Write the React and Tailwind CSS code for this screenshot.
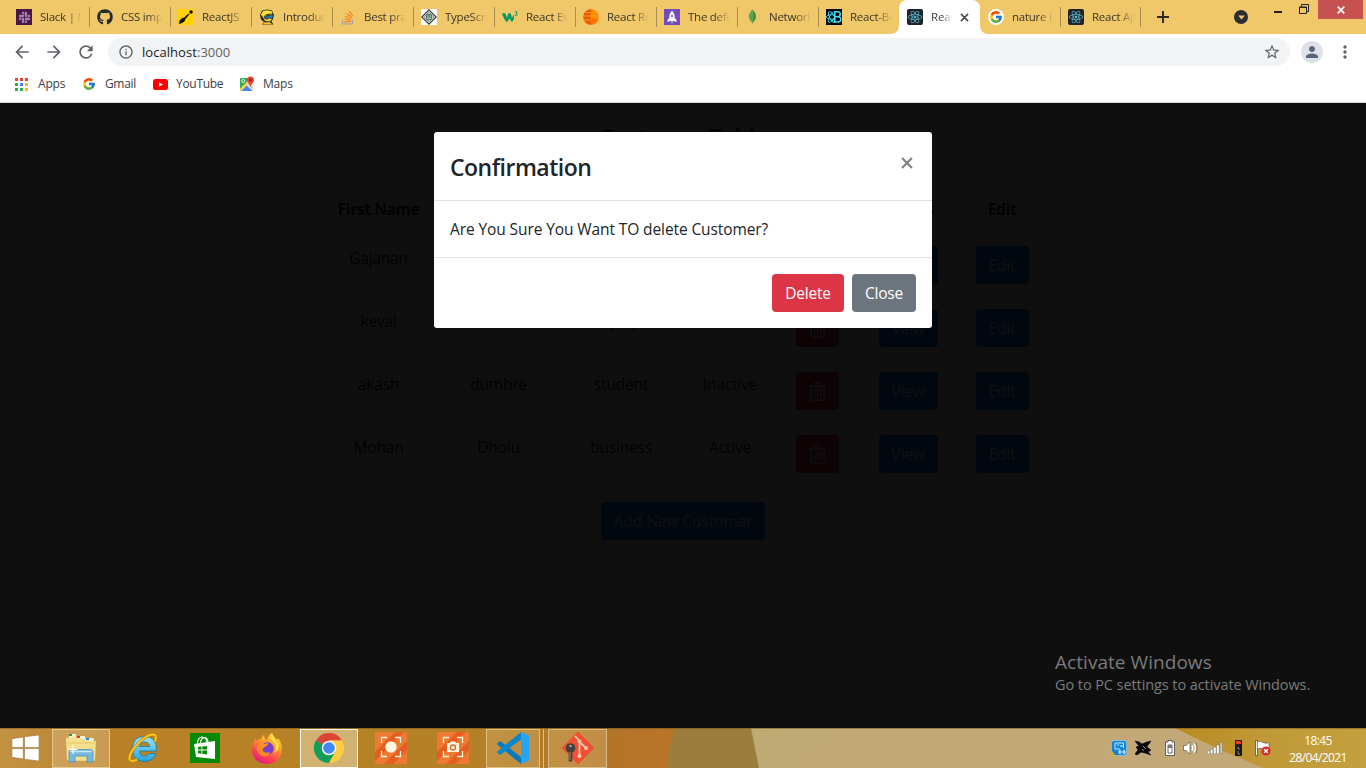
import React from "react";
import { FaGithub, FaReact, FaSlack } from "react-icons/fa";
import { FcGoogle } from "react-icons/fc";
import {
  MdArrowBack,
  MdArrowForward,
  MdRefresh,
  MdOutlineInfo,
  MdStarBorder,
  MdPerson,
  MdMoreVert,
} from "react-icons/md";

/* ---------- favicons ---------- */

const SlackIcon = () => (
  <span className="flex size-4 items-center justify-center bg-[#4a154b]">
    <FaSlack className="size-[13px] text-[#a583a6]" />
  </span>
);

const GithubIcon = () => <FaGithub className="size-4 text-[#24292e]" />;

const KnifeIcon = () => (
  <svg viewBox="0 0 16 16" className="size-4">
    <rect width="16" height="16" fill="#ffd200" />
    <path d="M1.2 14.8 L2 11.5 Q4 8.5 6 9 L10.5 5 L11 5.6 L7 10 Q7 12.5 4 13.5 Z" fill="#111" stroke="#111" strokeWidth=".7" />
    <circle cx="13" cy="3" r="1.8" fill="#111" />
  </svg>
);

const FaceIcon = () => (
  <svg viewBox="0 0 16 16" className="size-4">
    <path d="M1 6 L3 1.5 L8 .6 L13 1.5 L14.5 5 L14 10 L12.5 12.5 L14.5 15.5 H3 L5 13 L2 10.5 Z" fill="#2b2718" />
    <path d="M1.8 5.8 L4 2 L8 1.3 L12.8 2.2 L13.5 4.5 L8 5 L4 8 Z" fill="#ffe03a" />
    <path d="M3.5 7.5 L13 5 L13 10 L11 12.5 L6 12 Z" fill="#f6cc45" />
    <path d="M5.5 7.4 L14.5 5.6 L13.7 9 L10.9 9.4 L10 8 L8.8 10 L6 9.8 Z" fill="#1a86cc" stroke="#111" strokeWidth=".7" />
    <path d="M5 13.3 L11 13.3 L13.2 15.2 H4 Z" fill="#f0c23b" />
  </svg>
);

const StackIcon = () => (
  <svg viewBox="0 0 16 16" className="size-4" fill="none">
    <path d="M2.5 10.5 V14.8 H12.5 V10.5" stroke="#a3a5a6" strokeWidth="1.3" />
    <path d="M4.3 12.6 H10.8 M4.4 10 L10.8 11.2 M5 7.2 L11.2 9.8 M6.6 4.4 L12 8.2 M9.2 2.2 L13 7" stroke="#f48024" strokeWidth="1.2" />
  </svg>
);

const DiamondIcon = () => (
  <svg viewBox="0 0 16 16" className="size-4" fill="none">
    <rect width="16" height="16" fill="#fff" />
    <path d="M8 .8 L15.2 8 L8 15.2 L.8 8 Z" stroke="#333" strokeWidth="1.1" />
    <path d="M8 2.8 L13.2 8 L8 13.2 L2.8 8 Z" stroke="#555" strokeWidth=".7" />
    <circle cx="8" cy="8" r="3.4" fill="#4f7d61" />
    <path d="M6 7 H7.4 M8.7 7 H10 M6 9.2 H10" stroke="#dce9df" strokeWidth="1" />
  </svg>
);

const W3Icon = () => (
  <svg viewBox="0 0 16 16" className="size-4" fill="none">
    <path d="M0 4.2 H3.2 L5 8.8 L6.4 4.2 H8.6 L10 8.8 L12 5.4 V9.5 L10 13.2 L7.6 9.4 L5 13.2 Q2 11 0 4.2 Z" fill="#04995f" />
    <path d="M12.8 2.8 H15.2 L14 4.2 Q15.8 4.6 15.2 6 Q14.4 7 12.8 6.2" stroke="#04995f" strokeWidth=".9" />
  </svg>
);

const OrangeIcon = () => (
  <svg viewBox="0 0 16 16" className="size-4">
    <clipPath id="ball"><circle cx="8" cy="8" r="7.7" /></clipPath>
    <g clipPath="url(#ball)">
      <rect width="16" height="16" fill="#ff8a00" />
      <rect width="8" height="16" fill="#e65c00" />
      <path d="M0 3.5 H16 M0 7 H16 M0 11 H16" stroke="#ff9a14" strokeWidth="1" />
      <path d="M8 10 H16 V16 H8 Z" fill="#ff7400" />
    </g>
  </svg>
);

const RocketIcon = () => (
  <svg viewBox="0 0 16 16" className="size-4">
    <rect width="16" height="16" fill="#764abc" />
    <path d="M8 1.8 Q11 4.5 10.7 9 L12.5 11 V13 L10 12 H6 L3.5 13 V11 L5.3 9 Q5 4.5 8 1.8 Z M7 12.6 H9 L8 14.6 Z" fill="#fff" />
    <circle cx="8" cy="7" r="1.1" fill="#764abc" />
  </svg>
);

const LeafIcon = () => (
  <svg viewBox="0 0 16 16" className="size-4">
    <path d="M7.4 .5 Q3.6 4 3.8 8 Q4 11.5 7.2 13.8 L7.5 15.5 Z" fill="#58aa50" />
    <path d="M7.4 .5 Q11.4 4 11.1 8 Q10.8 11.5 7.8 13.8 L7.4 15.5 Z" fill="#3f9143" />
  </svg>
);

const ReactBootstrapIcon = () => (
  <svg viewBox="0 0 16 16" className="size-4" fill="none" stroke="#41e0fd">
    <rect width="16" height="16" fill="#000" stroke="none" />
    <ellipse cx="5.5" cy="8" rx="5" ry="2.2" strokeWidth=".9" />
    <ellipse cx="6" cy="8" rx="6" ry="2.3" strokeWidth=".9" transform="rotate(60 6 8)" />
    <ellipse cx="6" cy="8" rx="6" ry="2.3" strokeWidth=".9" transform="rotate(-60 6 8)" />
    <path d="M8.5 2.8 H12 Q14.4 3 14.2 5.4 Q14 7.6 12 7.7 H8.8 M12 7.7 Q15 7.8 14.9 10.4 Q14.6 13 12 13 H8.8 V3" strokeWidth="1.5" fill="#000" />
  </svg>
);

const ReactIcon = () => (
  <span className="flex size-4 items-center justify-center rounded-[2px] bg-[#20232a]">
    <FaReact className="size-[14px] text-[#61c5dc]" />
  </span>
);

const GoogleTabIcon = () => (
  <span className="flex size-4 items-center justify-center rounded-full bg-white">
    <FcGoogle className="size-[14px]" />
  </span>
);

/* ---------- browser chrome ---------- */

const leftTabs = [
  ["Slack | N", SlackIcon],
  ["CSS imp", GithubIcon],
  ["ReactJS", KnifeIcon],
  ["Introduc", FaceIcon],
  ["Best prac", StackIcon],
  ["TypeScr", DiamondIcon],
  ["React Ev", W3Icon],
  ["React Ro", OrangeIcon],
  ["The defi", RocketIcon],
  ["Network", LeafIcon],
  ["React-Bo", ReactBootstrapIcon],
];

const rightTabs = [
  ["nature im", GoogleTabIcon],
  ["React Ap", ReactIcon],
];

const Tab = ({ label, Icon, last, right }) => (
  <div className={`flex h-full items-center ${right ? "w-20" : "w-[81px]"}`}>
    <div className="flex w-full shrink-0 items-center pl-2">
      <span className="shrink-0"><Icon /></span>
      <span className="ml-2 w-[42px] shrink-0 overflow-hidden text-[11.5px] leading-4 tracking-[-0.25px] whitespace-nowrap text-[#3a3427] [mask-image:linear-gradient(to_right,#000_62%,transparent)]">
        {label}
      </span>
      <span className={`h-5 w-px shrink-0 ${right ? "ml-[6px]" : "ml-[7px]"} ${last ? "" : "bg-[#a98d4e]"}`} />
    </div>
  </div>
);

const TabStrip = () => (
  <div className="flex h-[34px] bg-[#f0c869] pl-2">
    {leftTabs.map(([label, Icon], i) => (
      <Tab key={label} label={label} Icon={Icon} last={i === leftTabs.length - 1} />
    ))}
    <div className="relative flex h-full w-[81px] items-center rounded-t-lg bg-white pl-2">
      <svg viewBox="0 0 8 8" className="absolute bottom-0 -left-2 size-2"><path d="M8 0 V8 H0 A8 8 0 0 0 8 0" fill="#fff" /></svg>
      <svg viewBox="0 0 8 8" className="absolute -right-2 bottom-0 size-2"><path d="M0 0 V8 H8 A8 8 0 0 1 0 0" fill="#fff" /></svg>
      <ReactIcon />
      <span className="ml-2 w-[21px] overflow-hidden text-[11.5px] leading-4 tracking-[-0.2px] whitespace-nowrap text-[#3c4043] [mask-image:linear-gradient(to_right,#000_50%,transparent)]">
        Reac
      </span>
      <svg viewBox="0 0 10 10" className="ml-2 size-[9px]"><path d="M1 1 L9 9 M9 1 L1 9" stroke="#45494d" strokeWidth="1.7" /></svg>
    </div>
    {rightTabs.map(([label, Icon]) => (
      <Tab key={label} label={label} Icon={Icon} right />
    ))}
    <svg viewBox="0 0 12 12" className="mt-[11px] ml-[17px] size-3"><path d="M6 0 V12 M0 6 H12" stroke="#2f2a1c" strokeWidth="2" /></svg>
    <div className="mt-[10px] ml-[65px] flex size-[14px] items-center justify-center rounded-full bg-[#2c2d30]">
      <svg viewBox="0 0 8 6" className="h-[5px] w-[7px]"><path d="M0 .5 H8 L4 5.5 Z" fill="#f0c869" /></svg>
    </div>
    <div className="mt-[11px] ml-[26px] h-[2px] w-2 bg-[#222]" />
    <svg viewBox="0 0 10 10" className="mt-[4px] ml-[17px] size-[10px]" fill="none" stroke="#222">
      <path d="M2.5 2.5 V.5 H9.5 V7.5 H7.5" /><path d="M.5 9.5 V3 H7.5 V9.5 Z" /><path d="M.5 3.4 H7.5" />
    </svg>
    <div className="ml-[9px] flex h-[19px] w-[45px] items-center justify-center bg-[#c75050]">
      <svg viewBox="0 0 8 8" className="size-2"><path d="M.7 .7 L7.3 7.3 M7.3 .7 L.7 7.3" stroke="#fff" strokeWidth="1.7" /></svg>
    </div>
  </div>
);

const Toolbar = () => (
  <div className="flex h-9 items-center bg-white pl-3 text-[#5f6368]">
    <MdArrowBack className="size-5" />
    <MdArrowForward className="ml-3 size-5" />
    <MdRefresh className="ml-3 size-5" />
    <div className="ml-3 flex h-7 w-[1182px] items-center rounded-full bg-[#f1f3f4] pr-[9px] pl-[10px]">
      <MdOutlineInfo className="size-4" />
      <span className="ml-2 pt-px text-[13px] tracking-[0.05px] text-[#606468]">
        <span className="text-[#202124]">localhost</span>:3000
      </span>
      <MdStarBorder className="ml-auto size-[18px]" />
    </div>
    <div className="ml-[11px] flex size-[22px] items-center justify-center rounded-full bg-[#dee1e6]">
      <MdPerson className="size-[18px] text-[#5a6478]" />
    </div>
    <MdMoreVert className="ml-3 size-5" />
  </div>
);

const AppsIcon = () => (
  <span className="grid grid-cols-3 gap-[2px]">
    {["bg-[#ea4335]", "bg-[#ea4335]", "bg-[#ea4335]", "bg-[#34a853]", "bg-[#4285f4]", "bg-[#fbbc04]", "bg-[#34a853]", "bg-[#34a853]", "bg-[#fbbc04]"].map((c, i) => (
      <span key={i} className={`size-[3px] ${c}`} />
    ))}
  </span>
);

const MapsIcon = () => (
  <svg viewBox="0 0 16 16" className="size-4">
    <rect x="1" y="2" width="13" height="13" rx="1.2" fill="#e8e8e8" />
    <path d="M1 3 Q1 2 2 2 H9 L8 7 L1 13.6 Z" fill="#34a853" />
    <path d="M1.6 15 L7.5 9.2 L13.4 15 Z" fill="#4285f4" />
    <path d="M1 12.5 L9.5 4 L11 6.5 L2.4 15 H2 Q1 15 1 14 Z" fill="#fbd04a" opacity=".85" />
    <path d="M8.5 8.2 L10 7 L14 11 V14 Z" fill="#c9c9c9" />
    <circle cx="4.2" cy="5" r="1.5" fill="none" stroke="#fff" strokeWidth=".8" />
    <path d="M11.5 .5 A3.6 3.6 0 0 1 15.1 4.1 Q15 6 12.8 8 L11.5 11 L10.2 8 Q8 6 7.9 4.1 A3.6 3.6 0 0 1 11.5 .5" fill="#ea4335" />
    <circle cx="11.5" cy="4" r="1.3" fill="#8c1b12" />
  </svg>
);

const Bookmarks = () => (
  <div className="flex h-[33px] items-center border-b border-[#d5d6d8] bg-white pb-[4px] pl-[15px] text-[12px] tracking-[-0.2px] text-[#3c4043]">
    <AppsIcon />
    <span className="ml-[10px] w-[45px]">Apps</span>
    <FcGoogle className="-ml-px size-[14px]" />
    <span className="ml-[9px] w-[48px] tracking-[-0.35px]">Gmail</span>
    <svg viewBox="0 0 15 11" className="h-[11px] w-[15px]"><rect width="15" height="11" rx="2.6" fill="#f00" /><path d="M6 3.2 L10 5.5 L6 7.8 Z" fill="#fff" /></svg>
    <span className="ml-2 w-[63px] tracking-[-0.3px]">YouTube</span>
    <MapsIcon />
    <span className="ml-2 tracking-[-0.2px]">Maps</span>
  </div>
);

/* ---------- page ---------- */

const customers = [
  ["Gajanan", "Bhosale", "student", "Active"],
  ["keval", "shah", "employee", "Active"],
  ["akash", "dumbre", "student", "Inactive"],
  ["Mohan", "Dholu", "business", "Active"],
];

const cols = "grid grid-cols-[122px_118px_127px_91px_83px_99px_89px] text-center";
const btn = "flex h-[38px] items-center justify-center rounded text-white";

const Trash = () => (
  <svg viewBox="0 0 17 19" className="h-[19px] w-[17px]" fill="none" stroke="#fff">
    <path d="M0 4 H17 M4.8 3.6 L6.2 1 H10.8 L12.2 3.6" strokeWidth="1.5" />
    <path d="M2 4 V16.5 Q2 18.2 3.7 18.2 H13.3 Q15 18.2 15 16.5 V4" strokeWidth="1.5" />
    <path d="M5.3 6.5 V15 M8.5 6.5 V15 M11.7 6.5 V15" strokeWidth="1.4" />
  </svg>
);

const Page = () => (
  <div className="flex h-full flex-col items-center bg-white text-[15.5px] leading-6 text-[#212529]">
    <h3 className="mt-[18px] h-[75px] text-[23px] leading-[33px] font-semibold tracking-[-0.5px]">Customer Table</h3>
    <div className="w-[731px]">
      <div className={`${cols} h-[38px] border-b-2 border-[#dee2e6] pt-px font-bold tracking-[-0.35px]`}>
        <span>First Name</span>
        <span>Last Name</span>
        <span>Occupation</span>
        <span>Status</span>
        <span>Delete</span>
        <span>Details</span>
        <span>Edit</span>
      </div>
      {customers.map((row) => (
        <div key={row[0]} className={`${cols} h-[63px] pt-3 tracking-[-0.2px]`}>
          {row.map((cell, i) => (
            <span key={i}>{cell}</span>
          ))}
          <span className={`${btn} mx-auto w-[43px] bg-[#dc3545]`}><Trash /></span>
          <span className={`${btn} mx-auto w-[59px] bg-[#007bff]`}>View</span>
          <span className={`${btn} mx-auto w-[53px] bg-[#007bff]`}>Edit</span>
        </div>
      ))}
    </div>
    <span className={`${btn} mt-4 w-[164px] bg-[#007bff] tracking-[-0.1px]`}>Add New Customer</span>
  </div>
);

const Modal = () => (
  <div className="flex w-[498px] flex-col rounded-[3px] bg-white text-[#212529]">
    <div className="flex h-[69px] items-start justify-between border-b border-[#dee2e6] px-4 pt-4">
      <h4 className="text-[23px] leading-[38px] font-semibold tracking-[-0.5px]">Confirmation</h4>
      <svg viewBox="0 0 11 11" className="mt-[9px] mr-[3px] size-3"><path d="M1 1 L10 10 M10 1 L1 10" stroke="#808080" strokeWidth="2" /></svg>
    </div>
    <div className="h-[57px] border-b border-[#dee2e6] p-4 text-[15.5px] leading-6 tracking-[-0.1px]">
      Are You Sure You Want TO delete Customer?
    </div>
    <div className="flex h-[70px] items-center justify-end gap-2 px-4 text-[15.5px] tracking-[-0.2px]">
      <button className={`${btn} w-[72px] bg-[#dc3545] pt-[2px]`}>Delete</button>
      <button className={`${btn} w-16 bg-[#6c757d] pt-[2px]`}>Close</button>
    </div>
  </div>
);

/* ---------- taskbar ---------- */

const Wallpaper = () => (
  <svg viewBox="0 0 1366 40" preserveAspectRatio="none" className="absolute inset-0 size-full">
    <defs>
      <linearGradient id="wood" x1="0" x2="1">
        <stop offset="0" stopColor="#c39243" />
        <stop offset=".16" stopColor="#b98028" />
        <stop offset=".5" stopColor="#b68225" />
        <stop offset=".72" stopColor="#b48028" />
        <stop offset=".9" stopColor="#b3752a" />
        <stop offset="1" stopColor="#bb7428" />
      </linearGradient>
      <linearGradient id="sand" x1="0" x2="1" y2=".1">
        <stop offset="0" stopColor="#c0aa74" />
        <stop offset="1" stopColor="#c3a878" />
      </linearGradient>
      <linearGradient id="gold" x1="0" x2="1">
        <stop offset="0" stopColor="#b98a20" />
        <stop offset=".5" stopColor="#c19a38" />
        <stop offset="1" stopColor="#c49f3e" />
      </linearGradient>
    </defs>
    <rect width="680" height="40" fill="url(#wood)" />
    <path d="M674 0 H760 V40 H667 Q669 18 674 0" fill="#9c7e3c" />
    <path d="M751 0 H1366 V40 H759 Z" fill="url(#sand)" />
    <path d="M1175 0 H1366 V40 H1263 Q1215 20 1175 0" fill="url(#gold)" />
    <path d="M0 .5 H1366" stroke="#6b4c14" strokeOpacity=".45" />
  </svg>
);

const WindowsLogo = () => (
  <svg viewBox="0 0 27 26" className="h-[26px] w-[27px]" fill="#fff" stroke="#8b6426" strokeWidth=".5">
    <path d="M0 3.7 L11.3 2 V12.4 H0 Z M12.5 1.8 L27 0 V12.4 H12.5 Z M0 13.6 H11.3 V24 L0 22.3 Z M12.5 13.6 H27 V26 L12.5 24.2 Z" />
  </svg>
);

const Explorer = () => (
  <svg viewBox="0 0 32 30" className="h-[30px] w-8">
    <path d="M1 5 H29 L30 28 H3 Z" fill="#e9cf78" />
    <path d="M4 1 H11 V5 H4 Z M12 3 H20 V6 H12 Z M20 5 H28 V8 H20 Z" fill="#f6f1d8" />
    <path d="M4 1 H7 V3 H4 Z" fill="#18a836" /><path d="M12 3 H15 V5 H12 Z" fill="#d93a22" /><path d="M21 5 H24 V7 H21 Z" fill="#1889d8" />
    <path d="M1 5 L11 3.5 L13 6 L20 6.5 L22 8 H31 L30 27 H2 Z" fill="#f3df8c" />
    <path d="M2 10 H30" stroke="#e5c864" />
    <path d="M4 19 Q4 16.5 7 16.5 H25 Q28 16.5 28 19 V29 H22 V23 H10 V29 H4 Z" fill="#75b9dc" stroke="#4991ba" strokeWidth=".8" />
    <path d="M5 18.5 H27" stroke="#c8eafa" strokeWidth="1.5" />
    <path d="M8 12 V21 M3.5 16.5 H12.5" stroke="#fff" strokeWidth="1" />
  </svg>
);

const InternetExplorer = () => (
  <svg viewBox="0 0 30 30" className="size-[30px]" fill="none">
    <defs><linearGradient id="ie" x2="0" y2="1"><stop stopColor="#9de5fb" /><stop offset="1" stopColor="#28a0dc" /></linearGradient></defs>
    <path d="M28.5 18 H11.5 Q12 23 16.5 23 Q20 23 21 20.5 H28 Q25.5 28.5 16.5 28.5 Q4.5 28.5 4.5 16 Q4.5 3.5 16.5 3.5 Q29 3.5 28.5 18 M11.5 13.5 H21.5 Q21 9 16.5 9 Q12 9 11.5 13.5" fill="url(#ie)" stroke="#167bad" strokeWidth=".8" fillRule="evenodd" />
    <path d="M27 8.5 Q29.5 1.5 25 1.5 Q19 1.5 10.5 10 Q.5 20.5 1.5 26 Q2.5 30 9 26.5" stroke="#b77d05" strokeWidth="3" />
    <path d="M27 8.5 Q29.5 1.5 25 1.5 Q19 1.5 10.5 10 Q.5 20.5 1.5 26 Q2.5 30 9 26.5" stroke="#fbc81b" strokeWidth="2" />
  </svg>
);

const Store = () => (
  <svg viewBox="0 0 30 30" className="size-[30px]">
    <rect width="30" height="30" fill="#048a04" />
    <path d="M4 11 L25 8 V26 L6 24 Z" fill="#fff" />
    <path d="M7.5 11 Q7.5 4.5 12 4 Q16.5 4 17 9.5 M10.5 10 Q11 4 15.5 4.8 Q18 6 18 9.5" stroke="#fff" strokeWidth="1.2" fill="none" />
    <path d="M8 14 L11.5 13.6 V16.6 H8 Z M12.3 13.5 L17 13 V16.6 H12.3 Z M8 17.5 H11.5 V20.7 L8 20.3 Z M12.3 17.5 H17 V21.4 L12.3 20.8 Z" fill="#048a04" />
  </svg>
);

const Firefox = () => (
  <svg viewBox="0 0 30 31" className="h-[31px] w-[30px]">
    <defs>
      <linearGradient id="fx" x1=".8" y1="0" x2=".3" y2="1"><stop stopColor="#ffe14b" /><stop offset=".4" stopColor="#ff9a2b" /><stop offset=".75" stopColor="#ff3e55" /><stop offset="1" stopColor="#e31587" /></linearGradient>
    </defs>
    <path d="M3 6 L5 8 Q7 6 9 6 Q10 3 12 2 Q12 5 15 7 Q16 2 20 0 Q21 3 25 7 L26 5 Q30 10 30 16 Q29 30 15 31 Q1 30 0 17 Q0 11 3 6" fill="url(#fx)" />
    <circle cx="15.5" cy="15.5" r="6.2" fill="#7542c8" />
    <path d="M5 12 Q8 9 12 11 L16 10 Q17 12 13 14 Q10 15 11 18 Q13 21 18 19 Q16 25 10 23 Q4 20 5 12" fill="#ff8b2b" />
    <path d="M20 1 Q18 6 22 9 Q26 15 22 20 Q28 17 26 10 Q21 5 20 1" fill="#ffe347" />
  </svg>
);

const Chrome = () => (
  <svg viewBox="0 0 30 30" className="size-[30px]">
    <path d="M15 15 L2 7.5 A15 15 0 0 1 28 7.5 H15 Z" fill="#db4437" />
    <path d="M15 15 L2 7.5 A15 15 0 0 0 15 30 L21.5 18.7 Z" fill="#0f9d58" />
    <path d="M15 7.5 H28 A15 15 0 0 1 15 30 L21.5 18.7 Z" fill="#ffcd40" />
    <circle cx="15" cy="15" r="7.3" fill="#f5f5f5" />
    <circle cx="15" cy="15" r="5.8" fill="#4486f4" />
  </svg>
);

const Capture = ({ camera }) => (
  <svg viewBox="0 0 32 32" className="size-8">
    <rect width="32" height="32" fill="#ee7a32" />
    <path d="M0 20 L20 0 H29 L0 29 Z M9 32 L32 9 V18 L18 32 Z" fill="#e55d20" />
    <path d="M6.5 11 V5.5 H12 M20 5.5 H25.5 V11 M25.5 19 V24.5 H20 M12 24.5 H6.5 V19" stroke="#fff6df" strokeWidth="1.3" fill="none" />
    {camera ? (
      <g>
        <path d="M10.5 11.5 H13 L14 10 H18 L19 11.5 H21.5 V19.5 H10.5 Z" fill="#fff6df" stroke="#fff6df" strokeLinejoin="round" />
        <circle cx="16" cy="15.5" r="2.5" fill="none" stroke="#e26626" strokeWidth="1.3" />
      </g>
    ) : (
      <circle cx="16" cy="15" r="5.7" fill="#fff6df" />
    )}
  </svg>
);

const VsCode = () => (
  <svg viewBox="0 0 32 32" className="size-8">
    <path d="M0 11.5 L3.2 9 L24 25 V32 L0.5 12.8 Z" fill="#0879c0" />
    <path d="M0 20.5 L3.2 23 L24 7.5 V0 L.5 19.4 Z" fill="#0a86cf" />
    <path d="M24 0 L32 3.5 V28.5 L24 32 Z" fill="#26a5f2" />
  </svg>
);

const Git = () => (
  <svg viewBox="0 0 32 32" className="size-8">
    <path d="M16 0 L32 16 L16 32 L0 16 Z" fill="#f05033" stroke="#f05033" strokeLinejoin="round" />
    <path d="M13 4 L17.5 9 V24 M17.5 10 L24 16" stroke="#f4c6aa" strokeWidth="1.8" fill="none" />
    <circle cx="17.5" cy="9.5" r="2" fill="#f4c6aa" /><circle cx="24" cy="16" r="2" fill="#f4c6aa" /><circle cx="17.5" cy="24" r="2" fill="#f4c6aa" />
    <circle cx="8.5" cy="16" r="4.8" fill="#44403d" />
    <path d="M8.5 18 V29.5" stroke="#44403d" strokeWidth="3.6" />
    <path d="M8 20 V28" stroke="#918b83" /><circle cx="8.5" cy="14" r="1.2" fill="#b8a997" />
  </svg>
);

const frame = "flex h-[39px] items-center justify-center border";

const Tray = () => (
  <div className="flex h-full items-center">
    <svg viewBox="0 0 16 16" className="size-4">
      <rect x=".4" y=".4" width="15.2" height="15.2" rx="3" fill="#1685d0" stroke="#8dcaf0" strokeWidth=".8" />
      <path d="M0 10 L5 16 H2 Q0 16 0 14 Z" fill="#f0a72a" />
      <path d="M4 3 H12.5 V8 M4 3 V9 H9 M6 5 H8 M9.5 5 L11.5 7 M11.5 5 L9.5 7" stroke="#d5f1ff" strokeWidth=".9" fill="none" />
      <path d="M9.5 10 Q6.5 12 9.5 14 M12.5 10 Q15.5 12 12.5 14 M9 12 H13" stroke="#e6f7ff" strokeWidth="1.1" fill="none" />
    </svg>
    <svg viewBox="0 0 16 16" className="ml-2 size-4">
      <path d="M0 1 L4 2 L7 4 L12 2 L16 1 L14 4 L12 6 L13 8 L16 10 L13 12 L16 15 L10 13 L6 12 L2 15 L0 14 L3 10 L1 7 L4 6 Z" fill="#050505" stroke="#050505" strokeWidth=".6" />
      <path d="M8 6 L11 9 M7 9 L9 11" stroke="#cbb47f" strokeWidth=".8" />
    </svg>
    <svg viewBox="0 0 10 16" className="ml-[14px] h-4 w-[10px]">
      <path d="M3 .5 H7 V2 H9.5 V15.5 H.5 V2 H3 Z" fill="#fff" stroke="#444" strokeWidth=".8" />
      <path d="M3 5 H7 V13 H3 Z" fill="#fff" stroke="#555" strokeWidth=".9" /><rect x="3" y="5" width="4" height="3" fill="#777" />
    </svg>
    <svg viewBox="0 0 15 14" className="ml-2 h-[14px] w-[15px]" fill="none">
      <path d="M.5 4.5 H3 L7 .7 V13.3 L3 9.5 H.5 Z" fill="#fff" stroke="#555" strokeWidth=".7" />
      <path d="M9 4.5 Q10.7 7 9 9.5 M11 2.5 Q14 7 11 11.5" stroke="#fff" strokeWidth="1.4" />
      <path d="M12.5 1.5 Q16 7 12.5 12.5" stroke="#555" strokeWidth=".6" />
    </svg>
    <svg viewBox="0 0 16 12" className="ml-[9px] h-3 w-4" stroke="#555" strokeWidth=".35">
      <path d="M.3 9 H2.8 V11.7 H.3 Z M3.4 7.5 H5.9 V11.7 H3.4 Z M6.5 5.3 H9 V11.7 H6.5 Z M9.6 3 H12.1 V11.7 H9.6 Z" fill="#fff" />
      <path d="M12.8 .3 H15.6 V11.7 H12.8 Z" fill="#d0c29a" />
    </svg>
    <svg viewBox="0 0 7 16" className="ml-[12px] h-4 w-[7px]">
      <rect width="7" height="16" rx="1" fill="#161616" /><path d="M1 1 H6 V4.2 H1 Z" fill="#e54127" />
      <path d="M3 6.5 V9 H5 M3 11 V14 H5" stroke="#aaa" fill="none" strokeWidth=".8" />
    </svg>
    <svg viewBox="0 0 16 16" className="ml-[13px] size-4">
      <path d="M1.5 .5 V15.5" stroke="#333" strokeWidth="2.6" /><path d="M1.5 1 V15" stroke="#fff" strokeWidth="1.4" />
      <path d="M2.3 2 Q6 .5 8 2.5 Q11 4 14 2.5 V9 Q11 10.5 8 9 Q5 7.5 2.3 9 Z" fill="#fff" stroke="#444" strokeWidth=".6" />
      <circle cx="11" cy="11" r="4.6" fill="#d92c26" /><path d="M9.2 9.2 L12.8 12.8 M12.8 9.2 L9.2 12.8" stroke="#fff" strokeWidth="1.5" />
    </svg>
    <div className="ml-4 w-[62px] pt-px text-center text-[12px] leading-[17px] tracking-[-0.6px] whitespace-nowrap text-white">
      <div>18:45</div>
      <div>28/04/2021</div>
    </div>
  </div>
);

const Taskbar = () => (
  <div className="relative h-10 shrink-0">
    <Wallpaper />
    <div className="relative flex h-full items-center justify-between pr-[17px]">
      <div className="flex h-full items-center">
        <span className="ml-3 -mt-px"><WindowsLogo /></span>
        <span className={`${frame} ml-[13px] w-[58px] border-[#e3c98f] bg-[#e8cfa0]/35`}><Explorer /></span>
        <span className="ml-[18px] -mt-px"><InternetExplorer /></span>
        <span className="ml-8"><Store /></span>
        <span className="ml-8"><Firefox /></span>
        <span className={`${frame} ml-[18px] w-[58px] border-[#fffaf0] bg-[#e5d2a8]/60`}><Chrome /></span>
        <span className="ml-[17px] -mt-px"><Capture /></span>
        <span className="ml-[30px] -mt-px"><Capture camera /></span>
        <span className={`${frame} ml-[17px] w-[54px] border-[#dcc182] bg-[#e2c88b]/25`}><VsCode /></span>
        <span className="h-[39px] w-1 border-r border-[#dcc182]" />
        <span className={`${frame} ml-[4px] w-[59px] border-[#d9bd83] bg-[#e2c88b]/30`}><Git /></span>
      </div>
      <Tray />
    </div>
  </div>
);

export default function App() {
  return (
    <div className="flex h-[768px] w-[1366px] flex-col overflow-hidden bg-white font-['Open_Sans','Noto_Sans',sans-serif]">
      <TabStrip />
      <Toolbar />
      <Bookmarks />
      <main className="relative h-[625px] shrink-0">
        <Page />
        <div className="absolute inset-0 flex items-start justify-center bg-black/94 pt-[29px]">
          <Modal />
        </div>
        <div className="absolute top-[547px] left-[1055px] whitespace-nowrap text-[#7b7b7b]">
          <div className="text-[19px] leading-6 tracking-[0.05px]">Activate Windows</div>
          <div className="text-[14.5px] leading-[22px] tracking-[-0.08px]">Go to PC settings to activate Windows.</div>
        </div>
      </main>
      <Taskbar />
    </div>
  );
}
